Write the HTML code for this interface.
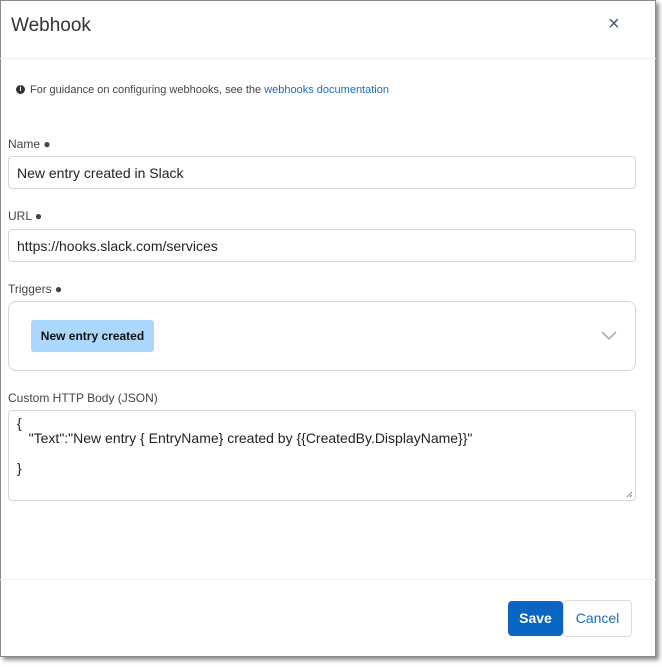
<!DOCTYPE html>
<html><head><style>
body{margin:0;width:662px;height:667px;background:#fff;font-family:"Liberation Sans",sans-serif;position:relative;overflow:hidden}
.dlg{position:absolute;left:0;top:0;width:654px;height:655px;border:1px solid #8a8a8a;background:#fff;box-shadow:3px 3px 4px rgba(0,0,0,.45)}
.w{position:absolute;left:-1px;top:-1px;width:656px;height:657px}
.a{position:absolute}
.lbl{font-size:12px;color:#444}
.inp{position:absolute;left:8px;width:626px;border:1px solid #d4d4d4;border-radius:4px;background:#fff}
</style></head><body>
<div class="dlg"><div class="w">
<div class="a" style="left:11px;top:15px;font-size:19px;color:#333">Webhook</div>
<div class="a" style="left:608px;top:13px;font-size:20px;color:#4a5a70">×</div>
<div class="a" style="left:0;top:58px;width:656px;height:1px;background:#e6eef6"></div>
<div class="a" style="left:16px;top:85px;width:9px;height:9px;border-radius:50%;background:#333;color:#fff;font-size:7px;text-align:center;line-height:9px;font-weight:bold">i</div>
<div class="a" style="left:30px;top:84px;font-size:11px;color:#444">For guidance on configuring webhooks, see the <span style="color:#1a6cc4">webhooks documentation</span></div>
<div class="a lbl" style="left:8px;top:137px">Name ●</div>
<div class="inp" style="top:156px;height:31px"><span class="a" style="left:8px;top:8px;font-size:14px;color:#222">New entry created in Slack</span></div>
<div class="a lbl" style="left:8px;top:209px">URL ●</div>
<div class="inp" style="top:229px;height:31px"><span class="a" style="left:8px;top:8px;font-size:14px;color:#222">https://hooks.slack.com/services</span></div>
<div class="a lbl" style="left:8px;top:282px">Triggers ●</div>
<div class="inp" style="top:301px;height:68px;border-radius:8px">
<div class="a" style="left:22px;top:18px;width:123px;height:32px;background:#abd7fd;border-radius:3px;font-size:12px;font-weight:bold;color:#111;line-height:32px;text-align:center">New entry created</div>
<svg class="a" style="left:592px;top:29px" width="16" height="10"><path d="M1 1L8 8L15 1" fill="none" stroke="#9aa8b8" stroke-width="1.5"/></svg>
</div>
<div class="a lbl" style="left:8px;top:391px">Custom HTTP Body (JSON)</div>
<div class="inp" style="top:410px;height:89px">
<div class="a" style="left:8px;top:5px;font-size:14px;color:#222;line-height:15px;white-space:pre">{
   "Text":"New entry { EntryName} created by {{CreatedBy.DisplayName}}"

}</div>
<svg class="a" style="left:617px;top:80px" width="7" height="7"><path d="M1 6L6 1M4 6L6 4" stroke="#888" stroke-width="1"/></svg>
</div>
<div class="a" style="left:0;top:579px;width:656px;height:1px;background:#eef2f6"></div>
<div class="a" style="left:508px;top:601px;width:55px;height:35px;background:#0a66c2;border-radius:4px;color:#fff;font-size:14px;font-weight:bold;text-align:center;line-height:35px">Save</div>
<div class="a" style="left:563px;top:600px;width:67px;height:35px;border:1px solid #d8dde3;border-radius:4px;color:#1a6cc4;font-size:14px;text-align:center;line-height:35px">Cancel</div>
</div></div>
</body></html>
